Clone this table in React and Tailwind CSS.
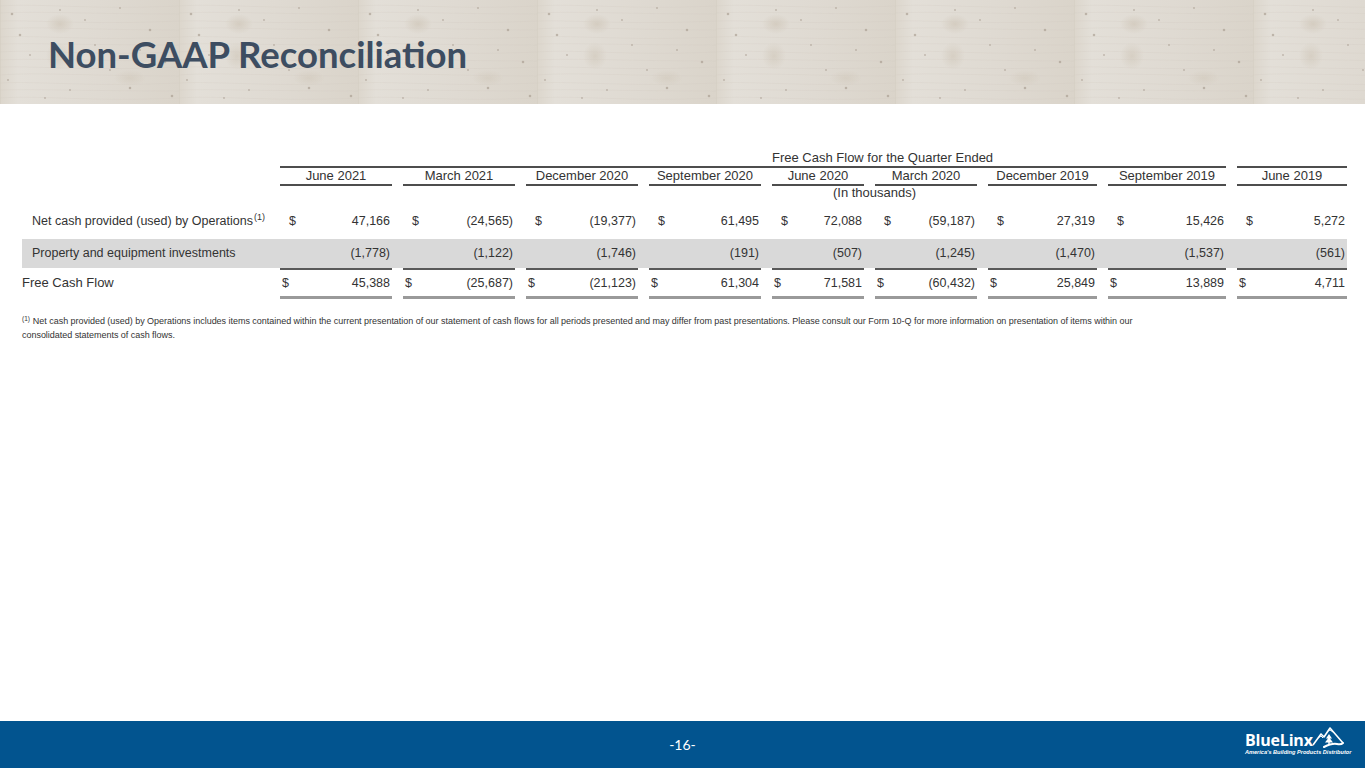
import React from "react";

const cols = ["June 2021","March 2021","December 2020","September 2020","June 2020","March 2020","December 2019","September 2019","June 2019"];
const ops = ["47,166","(24,565)","(19,377)","61,495","72,088","(59,187)","27,319","15,426","5,272"];
const ppe = ["(1,778)","(1,122)","(1,746)","(191)","(507)","(1,245)","(1,470)","(1,537)","(561)"];
const fcf = ["45,388","(25,687)","(21,123)","61,304","71,581","(60,432)","25,849","13,889","4,711"];

const G = "grid grid-cols-[247px_112px_112px_112px_112px_92px_102px_109px_118px_110px] gap-x-[11px]";

function Wood() {
  const knots = [[12,14],[60,10],[120,8],[150,30],[30,55],[95,45],[165,62],[8,80],[70,90],[130,88],[45,98],[110,70],[172,96],[85,20],[140,50],[20,35]];
  const grains = [6,13,21,29,37,44,52,60,67,75,83,90,98];
  return (
    <svg className="absolute inset-0 w-full h-full" preserveAspectRatio="none">
      <defs>
        <linearGradient id="tileg" x1="0" x2="1" y1="0" y2="0">
          <stop offset="0" stopColor="#dcd6cc" />
          <stop offset="0.1" stopColor="#e3dfd8" />
          <stop offset="0.55" stopColor="#dfdad2" />
          <stop offset="1" stopColor="#dad4ca" />
        </linearGradient>
        <radialGradient id="knot" cx="0.5" cy="0.5" r="0.5">
          <stop offset="0" stopColor="#cfc6b8" />
          <stop offset="1" stopColor="#cfc6b8" stopOpacity="0" />
        </radialGradient>
        <pattern id="wood" width="179" height="104" patternUnits="userSpaceOnUse">
          <rect width="179" height="104" fill="url(#tileg)" />
          <ellipse cx="60" cy="24" rx="14" ry="10" fill="url(#knot)" opacity="0.7" />
          <ellipse cx="58" cy="56" rx="12" ry="14" fill="url(#knot)" opacity="0.6" />
          <ellipse cx="130" cy="78" rx="16" ry="8" fill="url(#knot)" opacity="0.5" />
          {grains.map((y, i) => (
            <path key={i} d={`M0 ${y} C40 ${y - 3 + (i % 3)} 90 ${y + 4 - (i % 2) * 3} 179 ${y + (i % 2)}`} stroke="#cdc6ba" strokeWidth="0.5" fill="none" opacity="0.45" />
          ))}
          {knots.map(([x, y], i) => (
            <circle key={i} cx={x} cy={y} r={i % 3 === 0 ? 1.3 : 0.9} fill="#a3988a" opacity="0.6" />
          ))}
          <rect x="0" y="0" width="1" height="104" fill="#d2cbc0" opacity="0.5" />
        </pattern>
      </defs>
      <rect width="100%" height="100%" fill="url(#wood)" />
    </svg>
  );
}

function Logo() {
  return (
    <div className="flex flex-col w-[104px] text-white">
      <div className="flex items-end h-[22px]">
        <span className="text-[16px] leading-[16px] font-bold tracking-[-0.2px]" style={{ fontFamily: '"Open Sans", sans-serif' }}>BlueLinx</span>
        <svg viewBox="0 0 32 22" className="w-[32px] h-[24px] -ml-[1px] mb-[-1px]">
          <path d="M1 19 L9 8 L12 11 L18 2 L31 17" stroke="white" strokeWidth="1.6" fill="none" strokeLinejoin="round" />
          <path d="M6 12 L9 10 L11 12" stroke="white" strokeWidth="1" fill="none" />
          <path d="M16 5 L18 4 L21 6" stroke="white" strokeWidth="1" fill="none" />
          <path d="M17 8 L14 12.5 L16 12.5 L13 16.5 L16.3 16.5 L16.3 18.5 L17.7 18.5 L17.7 16.5 L21 16.5 L18 12.5 L20 12.5 Z" fill="white" />
          <path d="M12 21 Q20 17 25 18 Q29 19 31 17" stroke="white" strokeWidth="2" fill="none" strokeLinecap="round" />
        </svg>
      </div>
      <div className="text-[5.6px] leading-[7px] font-bold italic whitespace-nowrap mt-[1px]" style={{ fontFamily: '"Liberation Sans", Arial, sans-serif' }}>
        America's Building Products Distributor
      </div>
    </div>
  );
}

export default function App() {
  return (
    <div className="w-[1365px] h-[768px] flex flex-col bg-white overflow-hidden" style={{ fontFamily: '"Liberation Sans", Arial, sans-serif' }}>
      <div className="relative h-[104px] shrink-0">
        <Wood />
        <h1 className="relative pl-[48px] pt-[36px] text-[36.5px] leading-[36px] font-bold text-[#3d4d61]" style={{ fontFamily: 'Lato, sans-serif' }}>
          Non-GAAP Reconciliation
        </h1>
      </div>

      <div className="flex-1 pt-[46px]">
        <div className="ml-[22px] w-[1325px] text-[12.5px] text-[#333]">
          <div className={G + " h-[16px] text-[13px]"}>
            <div className="col-start-6 col-span-2 text-center leading-[16px] whitespace-nowrap">Free Cash Flow for the Quarter Ended</div>
          </div>
          <div className={G}>
            <div className="col-start-2 col-span-8 h-[2px] bg-[#4d4d4d]" />
            <div className="h-[2px] bg-[#4d4d4d]" />
          </div>
          <div className={G + " text-[13px]"}>
            <div />
            {cols.map((c) => (
              <div key={c} className="text-center leading-[16px] h-[18px] border-b-2 border-[#4d4d4d] whitespace-nowrap">{c}</div>
            ))}
          </div>
          <div className={G + " h-[14px] text-[13px]"}>
            <div className="col-start-6 col-span-2 text-center leading-[14px] whitespace-nowrap">(In thousands)</div>
          </div>

          <div className={G + " mt-[7px] h-[29px] items-center"}>
            <div className="pl-[10px] whitespace-nowrap">
              Net cash provided (used) by Operations<sup className="text-[9px] relative -top-[5px] ml-[1px]">(1)</sup>
            </div>
            {ops.map((v, i) => (
              <div key={i} className="flex justify-between pl-[9px] pr-[2px]">
                <span>$</span>
                <span>{v}</span>
              </div>
            ))}
          </div>

          <div className={G + " mt-[3px] h-[29px] items-center bg-[#d9d9d9]"}>
            <div className="pl-[10px] whitespace-nowrap">Property and equipment investments</div>
            {ppe.map((v, i) => (
              <div key={i} className="text-right pr-[2px]">{v}</div>
            ))}
          </div>
          <div className={G}>
            <div />
            {cols.map((c) => (
              <div key={c} className="h-[2px] bg-[#595959]" />
            ))}
          </div>

          <div className={G + " h-[26px] items-center"}>
            <div className="whitespace-nowrap text-[13px]">Free Cash Flow</div>
            {fcf.map((v, i) => (
              <div key={i} className="flex justify-between pl-[2px] pr-[2px]">
                <span>$</span>
                <span>{v}</span>
              </div>
            ))}
          </div>
          <div className={G}>
            <div />
            {cols.map((c) => (
              <div key={c} className="h-[3px] bg-[#9a9a9a]" />
            ))}
          </div>

          <div className="mt-[15px] text-[9px] leading-[14px] text-[#333] whitespace-nowrap tracking-[-0.03px]">
            <div>
              <sup className="text-[6.5px] mr-[3px]">(1)</sup>Net cash provided (used) by Operations includes items contained within the current presentation of our statement of cash flows for all periods presented and may differ from past presentations. Please consult our Form 10-Q for more information on presentation of items within our
            </div>
            <div>consolidated statements of cash flows.</div>
          </div>
        </div>
      </div>

      <div className="h-[47px] shrink-0 bg-[#02548f] grid grid-cols-3">
        <div />
        <div className="flex items-center justify-center text-white text-[14px]" style={{ fontFamily: 'Lato, sans-serif' }}>-16-</div>
        <div className="flex justify-end pr-[16px] pt-[5px]">
          <Logo />
        </div>
      </div>
    </div>
  );
}
